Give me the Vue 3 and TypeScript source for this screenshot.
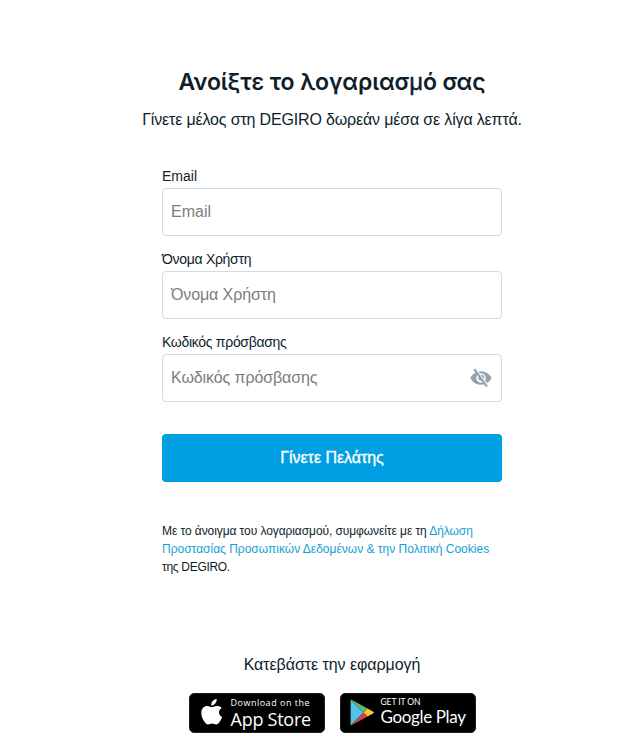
<script setup lang="ts">
import { ref } from 'vue'

interface Field {
  id: string
  label: string
  type: string
  secret: boolean
}

const fields: Field[] = [
  { id: 'email', label: 'Email', type: 'email', secret: false },
  { id: 'username', label: 'Όνομα Χρήστη', type: 'text', secret: false },
  { id: 'password', label: 'Κωδικός πρόσβασης', type: 'password', secret: true },
]

const values = ref<Record<string, string>>({ email: '', username: '', password: '' })
const revealed = ref(false)

function inputType(field: Field): string {
  return field.secret && revealed.value ? 'text' : field.type
}
</script>

<template>
  <main class="page">
    <h1 class="title">Ανοίξτε το λογαριασ<span class="mu">μ</span>ό σας</h1>
    <p class="subtitle">Γίνετε μέλος στη DEGIRO δωρεάν μέσα σε λίγα λεπτά.</p>

    <form class="form" @submit.prevent>
      <div v-for="field in fields" :key="field.id" class="field">
        <label class="label" :class="field.id" :for="field.id">{{ field.label }}</label>
        <div class="control">
          <input
            :id="field.id"
            v-model="values[field.id]"
            class="input"
            :class="field.id"
            :type="inputType(field)"
            :placeholder="field.label"
          />
          <button v-if="field.secret" class="toggle" type="button" @click="revealed = !revealed">
            <svg width="22" height="20" viewBox="0 0 22 20">
              <path
                fill="#95a3ae"
                fill-rule="evenodd"
                d="M11 3.200C6.200 3.200 2.200 6 .4 10c1.800 4 5.800 6.800 10.600 6.800s8.800-2.800 10.600-6.800C19.800 6 15.800 3.200 11 3.200ZM11 5.300a4.700 4.700 0 1 1 0 9.400 4.700 4.700 0 0 1 0-9.400Z"
              />
              <circle cx="11.300" cy="9.700" r="3" fill="#95a3ae" />
              <path d="M5.800 2.200 17.200 17.300" stroke="#fff" stroke-width="2.600" />
              <path d="M4.300 1.200 17 18.600" stroke="#95a3ae" stroke-width="2.200" />
            </svg>
          </button>
        </div>
      </div>

      <button class="submit" type="submit">Γίνετε Πελάτης</button>
    </form>

    <p class="legal">
      <span class="line one">Με το άνοιγμα του λογαριασμού, συμφωνείτε με τη <a>Δήλωση</a></span>
      <span class="line two"><a>Προστασίας Προσωπικών Δεδομένων &amp; την Πολιτική Cookies</a></span>
      <span class="line three">της DEGIRO.</span>
    </p>

    <p class="download">Κατεβάστε την εφαρμογή</p>
    <div class="stores">
      <a class="badge apple">
        <svg class="apple-logo" width="22" height="26" viewBox="0 0 22 26">
          <path
            fill="#fff"
            d="M15.700 0c.2 1.800-.5 3.400-1.500 4.500-1 1.200-2.500 2-4 1.900-.2-1.700.6-3.400 1.500-4.400C12.700.9 14.300.1 15.700 0ZM20.700 8.900c-1.800 1.100-2.700 2.500-2.700 4.300 0 2.100 1.200 4 3.200 4.800-.5 1.500-1.300 3-2.300 4.500-1.200 1.700-2.300 2.900-3.800 2.900-1.500 0-2.100-.9-4-.9s-2.500.9-4 .9c-1.600 0-2.800-1.400-4-3.200C1.400 19.700.3 16.900.3 14.100.3 9.500 3.200 7 6.100 7c1.800 0 3.300 1.100 4.600 1.100C11.900 8.100 13.700 6.900 15.900 6.900c1.900 0 3.700.6 4.800 2Z"
          />
        </svg>
        <span class="copy">
          <span class="small">Download on the</span>
          <span class="name">App Store</span>
        </span>
      </a>
      <a class="badge google">
        <svg class="play-logo" width="24" height="27" viewBox="0 0 24 27">
          <path fill="#55c3e8" d="M.6.600v25.800L13.600 13.500Z" />
          <path fill="#65b477" d="M.6.300 17.600 9.500l-4 4Z" />
          <path fill="#d63e55" d="M.6 26.700 17.600 17.500l-4-4Z" />
          <path fill="#fbc82e" d="m17.600 9.500 5.700 3.200q1 .8 0 1.600l-5.700 3.200-4-4Z" />
        </svg>
        <span class="copy">
          <span class="small">GET IT ON</span>
          <span class="name">Google Play</span>
        </span>
      </a>
    </div>
  </main>
</template>

<style>
body {
  background: #fff;
  overflow: hidden;
}
</style>

<style scoped>
.page {
  box-sizing: border-box;
  width: 627px;
  height: 747px;
  padding: 64px 0 0 37px;
  display: flex;
  flex-direction: column;
  align-items: center;
  font-family: "Liberation Sans", Arial, sans-serif;
  color: #0e1e2b;
}
.title {
  margin: 0;
  font-family: Inter, "Liberation Sans", sans-serif;
  font-size: 23px;
  line-height: 36px;
  font-weight: 600;
  letter-spacing: -0.12px;
  white-space: nowrap;
}
.mu {
  font-family: "Liberation Sans", Arial, sans-serif;
  font-weight: 400;
  font-size: 24px;
  line-height: 1;
  -webkit-text-stroke: 0.4px currentColor;
}
.subtitle {
  margin: 8px 0 0;
  font-size: 16px;
  line-height: 24px;
  letter-spacing: -0.16px;
  white-space: nowrap;
}
.form {
  width: 340px;
  margin-top: 35px;
}
.field {
  height: 83px;
}
.label {
  display: block;
  font-size: 14px;
  line-height: 18px;
  height: 21px;
}
.label.username,
.label.password {
  letter-spacing: -0.3px;
}
.control {
  display: flex;
  align-items: center;
  box-sizing: border-box;
  height: 48px;
  border: 1px solid #d3dbdf;
  border-radius: 4px;
  padding: 0 9px 0 8px;
}
.input {
  flex: 1;
  min-width: 0;
  border: 0;
  outline: 0;
  padding: 0;
  background: transparent;
  font: 16px/24px "Liberation Sans", Arial, sans-serif;
}
.input::placeholder {
  color: #7d7d7d;
  opacity: 1;
}
.input.username,
.input.password {
  letter-spacing: -0.1px;
}
.toggle {
  display: flex;
  border: 0;
  padding: 0;
  background: none;
}
.submit {
  display: block;
  width: 340px;
  height: 48px;
  margin-top: 18px;
  border: 0;
  padding: 0;
  border-radius: 4px;
  background: #009fe3;
  color: #fff;
  font: 16px/24px "Liberation Sans", Arial, sans-serif;
  letter-spacing: -0.04px;
  -webkit-text-stroke: 0.35px #fff;
}
.legal {
  width: 340px;
  margin: 40px 0 0;
  font-size: 12px;
  line-height: 18px;
}
.line {
  display: block;
  white-space: nowrap;
}
.line.one {
  letter-spacing: -0.08px;
}
.line.three {
  letter-spacing: -0.3px;
}
.legal a {
  color: #169fd6;
}
.download {
  margin: 77px 0 0;
  font-size: 16px;
  line-height: 24px;
  letter-spacing: -0.06px;
  white-space: nowrap;
}
.stores {
  display: flex;
  gap: 15px;
  margin-top: 16px;
}
.badge {
  box-sizing: border-box;
  width: 136px;
  height: 40px;
  border: 1px solid #202020;
  border-radius: 5px;
  background: #000;
  color: #fff;
  display: flex;
  align-items: flex-start;
  white-space: nowrap;
}
.apple-logo {
  margin: 5px 0 0 11px;
}
.play-logo {
  margin: 5px 0 0 9px;
}
.copy {
  display: flex;
  flex-direction: column;
}
.apple .copy {
  margin: 2px 0 0 8px;
  font-family: "Open Sans", "Noto Sans", sans-serif;
}
.google .copy {
  margin: 3px 0 0 7px;
  font-family: "Lato", sans-serif;
}
.apple .small {
  font-size: 9px;
  line-height: 13px;
  letter-spacing: 0.5px;
}
.apple .name {
  font-size: 18px;
  line-height: 20px;
  letter-spacing: -0.25px;
}
.google .small {
  font-size: 8.500px;
  line-height: 10px;
  letter-spacing: -0.1px;
}
.google .name {
  font-size: 17px;
  line-height: 19px;
  letter-spacing: -0.35px;
}
</style>
